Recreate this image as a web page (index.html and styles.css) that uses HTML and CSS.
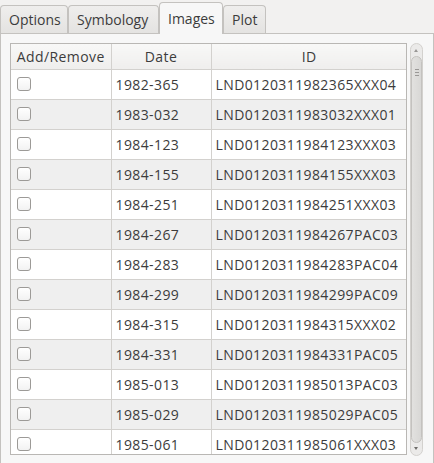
FILE: index.html
```html
<!DOCTYPE html>
<html>
<head>
<meta charset="utf-8">
<link rel="stylesheet" href="styles.css">
</head>
<body>
<div class="tabs">
  <div class="tab">Options</div>
  <div class="tab">Symbology</div>
  <div class="tab active">Images</div>
  <div class="tab">Plot</div>
</div>
<div class="pane">
  <div class="view">
    <div class="frame">
      <table class="grid">
        <colgroup><col class="c1"><col class="c2"><col class="c3"></colgroup>
        <thead>
          <tr><th>Add/Remove</th><th>Date</th><th>ID</th></tr>
        </thead>
        <tbody>
          <tr><td><span class="cb"></span></td><td>1982-365</td><td>LND0120311982365XXX04</td></tr>
          <tr><td><span class="cb"></span></td><td>1983-032</td><td>LND0120311983032XXX01</td></tr>
          <tr><td><span class="cb"></span></td><td>1984-123</td><td>LND0120311984123XXX03</td></tr>
          <tr><td><span class="cb"></span></td><td>1984-155</td><td>LND0120311984155XXX03</td></tr>
          <tr><td><span class="cb"></span></td><td>1984-251</td><td>LND0120311984251XXX03</td></tr>
          <tr><td><span class="cb"></span></td><td>1984-267</td><td>LND0120311984267PAC03</td></tr>
          <tr><td><span class="cb"></span></td><td>1984-283</td><td>LND0120311984283PAC04</td></tr>
          <tr><td><span class="cb"></span></td><td>1984-299</td><td>LND0120311984299PAC09</td></tr>
          <tr><td><span class="cb"></span></td><td>1984-315</td><td>LND0120311984315XXX02</td></tr>
          <tr><td><span class="cb"></span></td><td>1984-331</td><td>LND0120311984331PAC05</td></tr>
          <tr><td><span class="cb"></span></td><td>1985-013</td><td>LND0120311985013PAC03</td></tr>
          <tr><td><span class="cb"></span></td><td>1985-029</td><td>LND0120311985029PAC05</td></tr>
          <tr><td><span class="cb"></span></td><td>1985-061</td><td>LND0120311985061XXX03</td></tr>
        </tbody>
      </table>
    </div>
    <div class="scrollbar">
      <div class="arrow up"></div>
      <div class="thumb"><span class="grip"></span></div>
      <div class="arrow down"></div>
    </div>
  </div>
</div>
</body>
</html>
```
FILE: styles.css
```css
html, body {
  margin: 0;
  padding: 0;
  background: #f2f1f0;
  font-family: "Open Sans", "DejaVu Sans", sans-serif;
  font-size: 14px;
  color: #3c3c3c;
  width: 434px;
  height: 463px;
  overflow: hidden;
}
.tabs {
  display: flex;
  align-items: flex-end;
  height: 33px;
  box-sizing: border-box;
}
.tab {
  height: 28px;
  box-sizing: border-box;
  border: 1px solid #c4c2bf;
  border-bottom: none;
  border-radius: 4px 4px 0 0;
  background: linear-gradient(#efeeed, #e4e3e1);
  padding: 0 8px;
  display: flex;
  align-items: center;
  font-size: 14px;
  color: #3c3c3c;
}
.tab:nth-child(1) { width: 68px; }
.tab:nth-child(2) { width: 91px; }
.tab.active {
  width: 64px;
  background: #f7f7f7;
  position: relative;
  z-index: 1;
  margin-bottom: -1px;
  height: 32px;
}
.tab:nth-child(4) { width: 43px; }
.pane {
  height: 430px;
  box-sizing: border-box;
  border: 1px solid #c4c2bf;
  border-bottom: none;
  background: #f7f7f7;
  padding: 9px 10px 0 9px;
}
.view {
  display: flex;
  gap: 3px;
}
.frame {
  width: 398px;
  height: 412px;
  box-sizing: border-box;
  border: 1px solid #b9b7b4;
  background: #fff;
  overflow: hidden;
}
.grid {
  border-collapse: collapse;
  table-layout: fixed;
  width: 396px;
  letter-spacing: 0.4px;
}
.c1 { width: 100px; }
.c2 { width: 100px; }
.c3 { width: 196px; }
.grid th {
  height: 25px;
  box-sizing: border-box;
  font-weight: normal;
  background: linear-gradient(#f8f8f7, #efeeed);
  border-right: 1px solid #d3d1ce;
  border-bottom: 1px solid #d3d1ce;
  padding: 0;
  text-align: center;
  white-space: nowrap;
}
.grid th:last-child { border-right: none; }
.grid td {
  height: 30px;
  box-sizing: border-box;
  border-right: 1px solid #d3d1ce;
  border-bottom: 1px solid #d3d1ce;
  padding: 0 0 0 4px;
  white-space: nowrap;
  overflow: hidden;
}
.grid td:first-child { padding-left: 6px; }
.grid td:last-child { border-right: none; }
.grid tbody tr:nth-child(even) td { background: #efefef; }
.cb {
  display: inline-block;
  width: 12px;
  height: 12px;
  border: 1px solid #9c9a97;
  border-radius: 3px;
  background: linear-gradient(#ffffff, #f2f2f2);
  vertical-align: middle;
  margin-top: -4px;
}
.scrollbar {
  width: 13px;
  height: 413px;
  box-sizing: border-box;
  border: 1px solid #d3d1ce;
  border-radius: 7px;
  background: #ebeae9;
  display: flex;
  flex-direction: column;
  align-items: center;
  padding: 1px 0;
}
.arrow {
  height: 10px;
  width: 100%;
  position: relative;
}
.arrow.up::after, .arrow.down::after {
  content: "";
  position: absolute;
  left: 3px;
  border-left: 2.5px solid transparent;
  border-right: 2.5px solid transparent;
}
.arrow.up::after { top: 4px; border-bottom: 3px solid #9a9896; }
.arrow.down::after { top: 3px; border-top: 3px solid #6e6c6a; }
.thumb {
  flex: 1;
  width: 11px;
  box-sizing: border-box;
  border: 1px solid #c4c2bf;
  border-radius: 6px;
  background: linear-gradient(90deg, #e2e1df, #d8d7d5);
  margin: 1px 0;
  position: relative;
}
.grip {
  position: absolute;
  left: 3px;
  top: 12px;
  width: 4px;
  height: 7px;
  background: repeating-linear-gradient(#9a9896 0 1px, transparent 1px 3px);
}
```
